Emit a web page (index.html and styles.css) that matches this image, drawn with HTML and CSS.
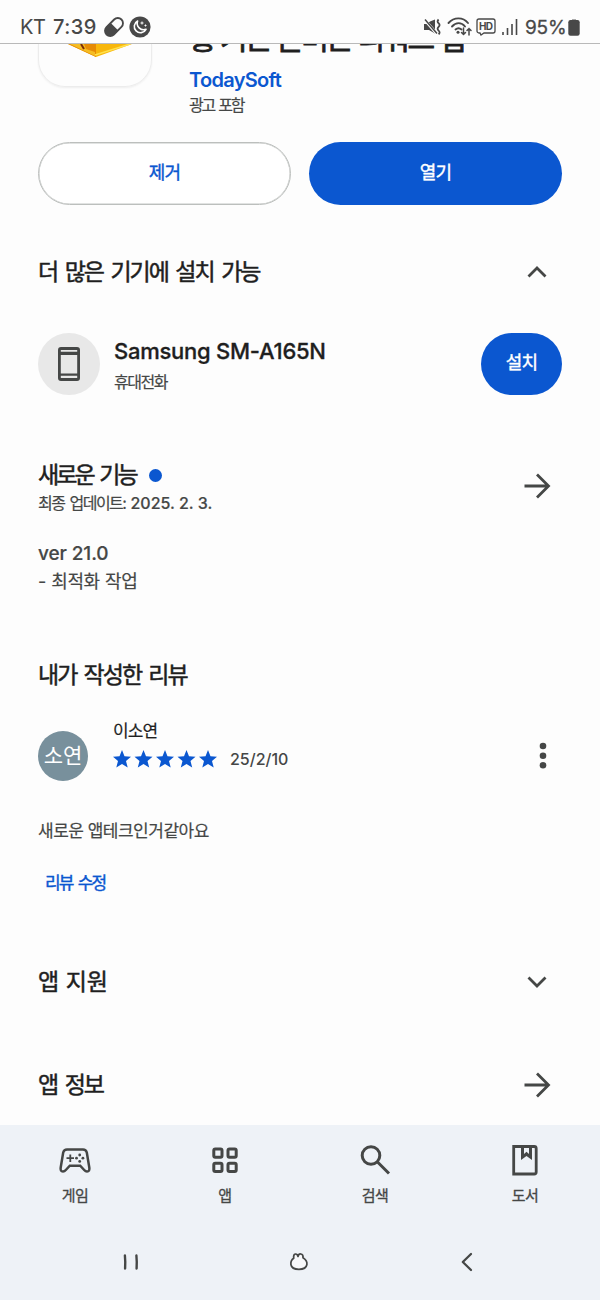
FILE: index.html
```html
<!DOCTYPE html>
<html lang="ko">
<head>
<meta charset="utf-8">
<title>TodaySoft</title>
<link rel="stylesheet" href="styles.css">
</head>
<body>
<header class="status">
  <div class="status-left">
    <span class="carrier">KT</span>
    <span class="clock">7:39</span>
    <svg class="pill-icon" width="22" height="22" viewBox="0 0 20 20"><g transform="rotate(-45 10 10)"><rect x="0.4" y="5.300" width="19.200" height="9.400" rx="4.700" fill="none" stroke="#484848" stroke-width="1.700"/><path d="M10.500 5H5.300a5 5 0 0 0 0 10h5.200z" fill="#484848"/></g></svg>
    <svg class="moon-icon" width="22" height="22" viewBox="0 0 22 22"><circle cx="11" cy="11" r="10.600" fill="#484848"/><path d="M8.600 5a6.200 6.200 0 1 0 8.400 8.300 6.500 6.500 0 0 1-8.400-8.300z" fill="#484848" stroke="#fff" stroke-width="1.600" stroke-linejoin="round"/><path d="M13 5.500v3M11.500 7h3M16.500 8.500v2M15.500 9.500h2" stroke="#fff" stroke-width="1"/></svg>
  </div>
  <div class="status-right">
    <svg width="18" height="18" viewBox="0 0 18 18"><path d="M1 6h3l3-2.500L12 1.500v14L6 12H1z" fill="#484848"/><path d="M1 1l13 15" stroke="#fff" stroke-width="2.800"/><path d="M2 1.500l12 14" stroke="#484848" stroke-width="1.500"/><path d="M15.600 1.500q-2 2 0 3.700t0 3.700 0 3.700 0 3.700" fill="none" stroke="#484848" stroke-width="1.800"/></svg>
    <svg class="wifi-icon" width="26" height="20" viewBox="0 0 26 20"><g fill="none" stroke="#484848" stroke-width="1.900" stroke-linecap="round"><path d="M1.500 6C7-.2 16-.2 21 6M5 9.500c4-4.500 9.500-4.500 13 0M8.500 12.500q3-2.500 6 0"/><path d="M16.500 11v6.500m-2-2l2 2 2-2M22 18v-6.500m-2 2l2-2 2 2" stroke-width="1.500"/></g><circle cx="11" cy="15.200" r="1.500" fill="#484848"/></svg>
    <svg width="20" height="18" viewBox="0 0 20 18"><path d="M3 1h14a2 2 0 0 1 2 2v10a2 2 0 0 1-2 2H8l-3 2-1-2H3a2 2 0 0 1-2-2V3a2 2 0 0 1 2-2z" fill="none" stroke="#484848" stroke-width="1.300"/><text x="10" y="12" text-anchor="middle" class="hd" textLength="14">HD</text></svg>
    <svg class="signal-icon" width="17" height="18" viewBox="0 0 17 18"><path d="M2 14v3M6.500 10v7M11 6v11M15.500 1v16" stroke="#484848" stroke-width="1.600"/></svg>
    <span class="percent">95%</span>
    <svg width="12" height="18" viewBox="0 0 12 18"><path d="M4 1h4v2H4z" fill="#aaa"/><rect x=".3" y="2" width="11.400" height="15.700" rx="2.200" fill="#484848"/></svg>
  </div>
</header>

<main class="page">
  <section class="app">
    <div class="app-icon">
      <svg width="64" height="14" viewBox="0 0 64 14"><path d="M0 0h64L28 13z" fill="#f8b70c"/><path d="M0 0h28v13z" fill="#e68b05"/><path d="M2 0h14l2 5 9 3v4z" fill="#f5bd24"/><path d="M13 0l3 5" stroke="#7b2b07" stroke-width="2"/><path d="M27 11L62 0" stroke="#ffe14d" stroke-width="1.500"/></svg>
    </div>
    <div class="app-info">
      <div class="title-clip"><h1 class="title">홍 기는 돈버는 리워드 앱</h1></div>
      <a class="developer">TodaySoft</a>
      <span class="ads">광고 포함</span>
    </div>
  </section>

  <div class="actions">
    <button class="btn btn-outline">제거</button>
    <button class="btn btn-fill">열기</button>
  </div>

  <section class="row devices-head">
    <h2 class="heading devices-title">더 많은 기기에 설치 가능</h2>
    <svg class="chevron" width="20" height="12" viewBox="0 0 20 12"><path d="M1.500 10.500L10 2l8.500 8.500"/></svg>
  </section>

  <section class="device">
    <div class="device-icon">
      <svg width="22" height="34" viewBox="0 0 22 34"><path fill-rule="evenodd" d="M3 0h16a3 3 0 0 1 3 3v28a3 3 0 0 1-3 3H3a3 3 0 0 1-3-3V3a3 3 0 0 1 3-3zM2.800 8v18.500h16.400V8zM2.800 28.800v2.300h16.400v-2.300zM2.800 3v1.800h16.400V3z" fill="#454746"/></svg>
    </div>
    <div class="device-info">
      <span class="device-name">Samsung SM-A165N</span>
      <span class="device-type">휴대전화</span>
    </div>
    <button class="btn btn-fill btn-install">설치</button>
  </section>

  <section class="news">
    <div class="news-head">
      <div>
        <h2 class="heading news-title">새로운 기능<i class="dot"></i></h2>
        <p class="updated">최종 업데이트: <span class="date">2025. 2. 3.</span></p>
      </div>
      <svg class="arrow" width="28" height="26" viewBox="0 0 28 26"><path d="M1.500 13H26M14 1.500L25.500 13 14 24.500"/></svg>
    </div>
    <p class="notes"><span class="ver">ver 21.0</span><br><span class="change">- 최적화 작업</span></p>
  </section>

  <section class="review">
    <h2 class="heading review-title">내가 작성한 리뷰</h2>
    <div class="reviewer">
      <div class="avatar">소연</div>
      <div class="reviewer-info">
        <span class="name">이소연</span>
        <div class="rating">
          <svg width="104" height="18" viewBox="0 0 104 18"><defs><path id="star" d="M9 0l2.500 6.300 6.500.4-5 4.300 1.700 6.600L9 13.900l-5.700 3.700L5 11 0 6.700l6.500-.4z"/></defs><g fill="#0b57d0"><use href="#star"/><use href="#star" x="21.500"/><use href="#star" x="43"/><use href="#star" x="64.500"/><use href="#star" x="86"/></g></svg>
          <span class="review-date">25/2/10</span>
        </div>
      </div>
      <svg class="more" width="8" height="28" viewBox="0 0 8 28"><circle cx="4" cy="4" r="3.300"/><circle cx="4" cy="13.700" r="3.300"/><circle cx="4" cy="23.300" r="3.300"/></svg>
    </div>
    <p class="review-text">새로운 앱테크인거같아요</p>
    <a class="edit">리뷰 수정</a>
  </section>

  <section class="row support">
    <h2 class="heading support-title">앱 지원</h2>
    <svg class="chevron" width="20" height="12" viewBox="0 0 20 12"><path d="M1.500 1.500L10 10l8.500-8.500"/></svg>
  </section>
  <section class="row about">
    <h2 class="heading about-title">앱 정보</h2>
    <svg class="arrow" width="28" height="26" viewBox="0 0 28 26"><path d="M1.500 13H26M14 1.500L25.500 13 14 24.500"/></svg>
  </section>
</main>

<footer class="bottom">
  <nav class="tabs">
    <a class="tab"><svg width="34" height="34" viewBox="0 0 34 34"><path d="M9 6.500h16q3 0 3.800 3l2.500 15q.7 4-2.300 4-1.500 0-2.800-1.500l-4-4.300H11.800l-4 4.300Q6.500 28.500 5 28.500q-3 0-2.300-4l2.500-15q.8-3 3.800-3z" fill="none" stroke="#454746" stroke-width="2.500"/><path d="M12.300 11.500v7.500M8.500 15.200H16" stroke="#454746" stroke-width="1.800"/><g fill="#454746"><circle cx="21.700" cy="12" r="1.400"/><circle cx="21.700" cy="18.400" r="1.400"/><circle cx="18.500" cy="15.200" r="1.400"/><circle cx="24.900" cy="15.200" r="1.400"/></g></svg><span>게임</span></a>
    <a class="tab"><svg width="34" height="34" viewBox="0 0 34 34"><g fill="none" stroke="#454746" stroke-width="3"><rect x="5.800" y="6" width="8.200" height="8.200" rx="1.500"/><rect x="20" y="6" width="8.200" height="8.200" rx="1.500"/><rect x="5.800" y="20.200" width="8.200" height="8.200" rx="1.500"/><rect x="20" y="20.200" width="8.200" height="8.200" rx="1.500"/></g></svg><span>앱</span></a>
    <a class="tab"><svg width="34" height="34" viewBox="0 0 34 34"><g fill="none" stroke="#454746" stroke-width="3"><circle cx="13" cy="12.500" r="8.800"/><path d="M19 18.500L31 30.500"/></g></svg><span>검색</span></a>
    <a class="tab"><svg width="34" height="34" viewBox="0 0 34 34"><path d="M5.700 3.500h20.500q2 0 2 2v23.500q0 2-2 2H5.700z" fill="none" stroke="#454746" stroke-width="2.800"/><path d="M13 3h11v14l-5.500-4-5.500 4zM16 3v8l2.500-2.200L21 11V3z" fill="#454746" fill-rule="evenodd"/></svg><span>도서</span></a>
  </nav>
  <div class="system">
    <svg width="20" height="20" viewBox="0 0 20 20"><path d="M3.900 3.500q.6 6 .2 13M15.400 3.500q.6 6 .2 13" stroke-width="2.400"/></svg>
    <svg width="20" height="20" viewBox="0 0 20 20"><path d="M9 4.500q.6-2.800 2.800-2.500 2.700.4 2.200 3.800 4.500 2.800 3.900 6.700-.8 4.800-8 4.800t-8-4.800q-.4-4 2.800-6.200Q4.200 2.400 6.300 2q2.100-.2 2.700 2.500z" fill="#f8f9fb" stroke-width="1.700"/></svg>
    <svg width="20" height="20" viewBox="0 0 20 20"><path d="M15 2L6.800 10l8.200 8" stroke-width="2.300"/></svg>
  </div>
</footer>
</body>
</html>
```

FILE: styles.css
```css
* { box-sizing: border-box; }
body {
  margin: 0;
  width: 600px;
  background: #fdfdfd;
  color: #1f1f1f;
  font-family: Inter, "Noto Sans CJK KR", sans-serif;
  font-weight: 400;
}
h1, h2, p { margin: 0; font-weight: 400; }
svg { display: block; flex: none; }
button { font-family: inherit; border: 0; padding: 0; }

.status {
  height: 44px;
  padding: 12px 20px 0;
  border-bottom: 1px solid #b9b9b9;
  background: #fdfdfd;
  display: flex;
  justify-content: space-between;
  color: #484848;
}
.status-left, .status-right { display: flex; align-items: center; height: 30px; }
.carrier { font-size: 20px; width: 33px; letter-spacing: -0.500px; }
.clock { font-size: 20px; font-weight: 500; width: 50px; letter-spacing: 0.500px; }
.moon-icon { margin-left: 4px; }
.wifi-icon { margin-left: 6px; }
.wifi-icon + svg { margin-left: 3px; }
.signal-icon { margin-left: 5px; }
.percent { font-size: 19px; width: 43px; margin-left: 7px; letter-spacing: -0.200px; white-space: nowrap; -webkit-text-stroke: 0.300px; }
.hd { font: 700 10px Inter, sans-serif; fill: #484848; }

.page { height: 1081px; padding: 0 38px; }
.app { height: 98px; display: flex; gap: 37px; }
.app-icon {
  width: 114px;
  height: 43px;
  border: 1px solid #ececec;
  border-top: 0;
  border-radius: 0 0 27px 27px;
  box-shadow: 0 1px 2px #eee;
  padding-left: 29px;
}
.app-info { display: flex; flex-direction: column; }
.title-clip { height: 24px; overflow: hidden; }
.title { font-size: 30px; line-height: 40px; margin-top: -26px; letter-spacing: -2.500px; white-space: nowrap; -webkit-text-stroke: 0.800px; }
.developer { font-size: 20px; line-height: 24px; font-weight: 600; letter-spacing: -0.700px; color: #0b57d0; }
.ads { font-size: 16px; line-height: 26px; color: #454746; letter-spacing: -2.200px; word-spacing: 2px; -webkit-text-stroke: 0.200px; }

.actions { display: grid; grid-template-columns: 1fr 1fr; gap: 18px; }
.btn {
  height: 63px;
  border-radius: 32px;
  font-size: 18px;
  line-height: 24px;
  letter-spacing: -0.700px;
  -webkit-text-stroke: 0.400px;
  padding-bottom: 2px;
}
.btn-outline { background: #fff; border: 1px solid #bcbfbd; box-shadow: inset 0 0 0 0.500px #c4c7c5; color: #0b57d0; }
.btn-fill { background: #0b57d0; color: #fff; }
.btn-install { flex: none; width: 81px; }

.row { display: flex; justify-content: space-between; align-items: center; }
.heading { font-size: 23px; line-height: 34px; -webkit-text-stroke: 0.500px; white-space: nowrap; }
.devices-head { height: 128px; padding: 6px 15px 0 0; }
.devices-title { letter-spacing: -2px; word-spacing: 3px; }
.chevron { fill: none; stroke: #454746; stroke-width: 2.800; }
.arrow { fill: none; stroke: #454746; stroke-width: 2.800; }

.device { display: flex; height: 62px; align-items: center; }
.device .btn { height: 62px; }
.device-icon {
  width: 62px;
  height: 62px;
  border-radius: 50%;
  background: #e8e8e8;
  display: flex;
  align-items: center;
  justify-content: center;
}
.device-info { flex: 1; padding: 3px 0 0 14px; display: flex; flex-direction: column; }
.device-name { font-size: 22px; line-height: 32px; font-weight: 500; letter-spacing: -0.250px; -webkit-text-stroke: 0.300px; }
.device-type { font-size: 16px; line-height: 30px; color: #454746; letter-spacing: -1.500px; -webkit-text-stroke: 0.200px; }

.news { padding-top: 63px; }
.news-head { display: flex; justify-content: space-between; align-items: center; padding-right: 11px; }
.news-title { display: flex; align-items: center; letter-spacing: -2.900px; word-spacing: 3px; }
.dot { width: 13px; height: 13px; border-radius: 50%; background: #0b57d0; margin-left: 13px; }
.updated { font-size: 16px; line-height: 22px; color: #454746; letter-spacing: -1.500px; word-spacing: 2px; -webkit-text-stroke: 0.200px; }
.date { font-weight: 500; letter-spacing: 0; word-spacing: 0; }
.notes { padding-top: 26px; font-size: 18px; line-height: 28px; color: #454746; -webkit-text-stroke: 0.200px; }
.ver { font-weight: 500; font-size: 19px; letter-spacing: -0.100px; }
.change { letter-spacing: -0.500px; word-spacing: 1px; }

.review { padding-top: 62px; }
.review-title { letter-spacing: -1.800px; word-spacing: 2px; }
.reviewer { display: flex; height: 80px; margin-top: 24px; align-items: center; padding-right: 15px; }
.avatar {
  width: 50px;
  height: 50px;
  border-radius: 50%;
  background: #78909c;
  color: #fff;
  font-size: 21px;
  line-height: 50px;
  text-align: center;
}
.reviewer-info { flex: 1; padding-left: 25px; height: 74px; }
.name { display: block; font-size: 17px; line-height: 24px; letter-spacing: -0.900px; -webkit-text-stroke: 0.200px; }
.rating { display: flex; align-items: center; height: 32px; gap: 13px; }
.review-date { font-size: 16px; font-weight: 500; color: #454746; }
.more { fill: #454746; }
.review-text { margin-top: 22px; font-size: 17px; line-height: 27px; color: #454746; letter-spacing: -0.500px; -webkit-text-stroke: 0.200px; }
.edit { display: block; margin: 25px 0 0 7px; font-size: 17px; line-height: 27px; color: #0b57d0; letter-spacing: -1.800px; word-spacing: 2px; -webkit-text-stroke: 0.400px; }

.support { height: 60px; margin-top: 55px; padding-right: 15px; }
.about { height: 60px; margin-top: 43px; padding-right: 11px; }
.about-title { letter-spacing: -2px; word-spacing: 3px; }

.bottom { height: 175px; background: #eef2f7; }
.tabs { display: grid; grid-template-columns: repeat(4, 1fr); padding-top: 18px; height: 106px; }
.tab {
  display: flex;
  flex-direction: column;
  align-items: center;
  gap: 7px;
  font-size: 15px;
  line-height: 24px;
  color: #454746;
  letter-spacing: -0.500px;
  -webkit-text-stroke: 0.300px;
}
.system { display: flex; justify-content: space-between; padding: 21px 124px 0 121px; }
.system svg { fill: none; stroke: #454746; stroke-linecap: round; stroke-linejoin: round; }
```
